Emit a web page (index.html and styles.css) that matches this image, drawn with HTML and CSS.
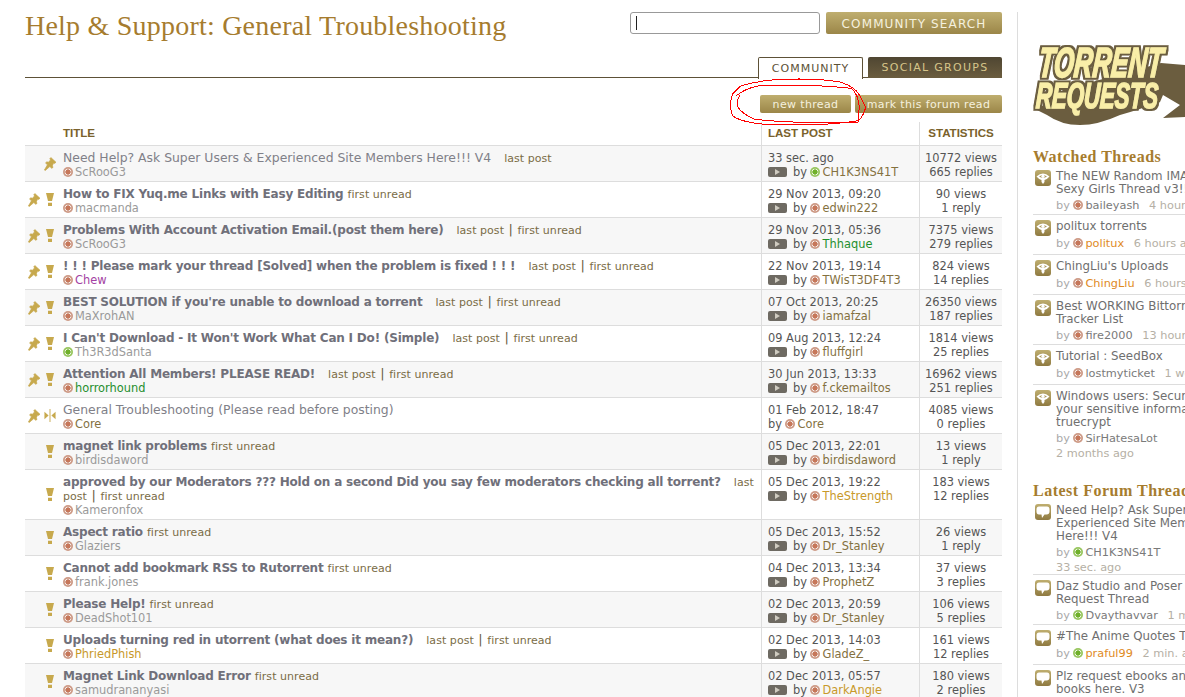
FILE: index.html
```html
<!DOCTYPE html>
<html lang="en">
<head>
<meta charset="utf-8">
<title>Help &amp; Support: General Troubleshooting</title>
<link rel="stylesheet" href="styles.css">
</head>
<body>
<svg class="defs" width="0" height="0" aria-hidden="true">
  <symbol id="pin" viewBox="0 0 14 16"><path d="M8 0.5 L14 6 L12.3 7.3 L11.2 6.7 L9.8 10 L10.5 12 L9 13 L6.8 11 L1.5 15.5 L0.5 15 L4 9 L1.8 6.8 L3.3 5.5 L5.2 6 L7.6 3.2 L6.8 1.8 Z"/></symbol>
  <symbol id="bang" viewBox="0 0 8 13"><path d="M0 0 H8 L6 8 H2 Z M2 9.8 H6 V13 H2 Z"/></symbol>
  <symbol id="moved" viewBox="0 0 12 14"><path d="M0 3 L4.5 7 L0 11 Z M12 3 L7.5 7 L12 11 Z M5.5 0 H6.5 V14 H5.5 Z"/></symbol>
  <symbol id="eye" viewBox="0 0 16 16"><path fill-rule="evenodd" d="M1.5 6.5 Q8 0.5 14.5 6.5 Q12 9.5 9.5 10 L9.5 12 L8 14 L6.5 12 L6.5 10 Q4 9.5 1.5 6.5 Z M4 6.5 Q8 3.5 12 6.5 Q8 9 4 6.5 Z"/><circle cx="8" cy="6.3" r="1.6"/></symbol>
  <symbol id="bubble" viewBox="0 0 16 16"><path d="M4 2.5 H12 Q14.5 2.5 14.5 5.5 V7.5 Q14.5 10.5 11.5 10.5 H9.5 L7 14 L6.5 10.5 H4 Q1.5 10.5 1.5 7.5 V5.5 Q1.5 2.5 4 2.5 Z"/></symbol>
  <filter id="outline" x="-5%" y="-15%" width="110%" height="130%">
    <feMorphology in="SourceAlpha" operator="dilate" radius="2.4" result="fat"/>
    <feFlood flood-color="#6b5d3f"/>
    <feComposite in2="fat" operator="in" result="edge"/>
    <feMerge><feMergeNode in="edge"/><feMergeNode in="SourceGraphic"/></feMerge>
  </filter>
</svg>

<div class="page">
  <main class="content">
    <header class="head">
      <h1 class="page-title">Help &amp; Support: General Troubleshooting</h1>
      <form class="search">
        <span class="field"><input class="search-input" type="text" aria-label="Search"><i class="caret"></i></span>
        <button class="btn btn-search" type="button">COMMUNITY SEARCH</button>
      </form>
    </header>
    <nav class="tabs">
      <a class="tab tab-active">COMMUNITY</a>
      <a class="tab tab-dark">SOCIAL GROUPS</a>
    </nav>
    <div class="actions">
      <button class="btn btn-small btn-new" type="button">new thread</button>
      <button class="btn btn-small btn-read" type="button">mark this forum read</button>
    </div>

    <div class="table">
      <div class="row row-head">
        <div class="c-icons"></div>
        <div class="c-main th">TITLE</div>
        <div class="c-last th">LAST POST</div>
        <div class="c-stat th">STATISTICS</div>
      </div>
      <div class="rows">

      <div class="row">
        <div class="c-icons"><span class="slot"></span><svg class="ic ic-pin"><use href="#pin"/></svg></div>
        <div class="c-main"><div class="line"><a class="t">Need Help? Ask Super Users &amp; Experienced Site Members Here!!! V4</a><span class="links wide">last post</span></div><div class="auth"><i class="dot"></i><span class="n-gray">ScRooG3</span></div></div>
        <div class="c-last"><div>33 sec. ago</div><div class="by"><i class="chip"></i>by <i class="dot dot-g"></i><span class="n-olive">CH1K3NS41T</span></div></div>
        <div class="c-stat">10772 views<br>665 replies</div>
      </div>

      <div class="row">
        <div class="c-icons"><svg class="ic ic-pin"><use href="#pin"/></svg><svg class="ic ic-bang"><use href="#bang"/></svg></div>
        <div class="c-main"><div class="line"><a class="t b">How to FIX Yuq.me Links with Easy Editing</a><span class="links">first unread</span></div><div class="auth"><i class="dot"></i><span class="n-gray">macmanda</span></div></div>
        <div class="c-last"><div>29 Nov 2013, 09:20</div><div class="by"><i class="chip"></i>by <i class="dot"></i><span class="n-olive">edwin222</span></div></div>
        <div class="c-stat">90 views<br>1 reply</div>
      </div>

      <div class="row">
        <div class="c-icons"><svg class="ic ic-pin"><use href="#pin"/></svg><svg class="ic ic-bang"><use href="#bang"/></svg></div>
        <div class="c-main"><div class="line"><a class="t b">Problems With Account Activation Email.(post them here)</a><span class="links wide">last post <s>|</s> first unread</span></div><div class="auth"><i class="dot"></i><span class="n-gray">ScRooG3</span></div></div>
        <div class="c-last"><div>29 Nov 2013, 05:36</div><div class="by"><i class="chip"></i>by <i class="dot"></i><span class="n-green">Thhaque</span></div></div>
        <div class="c-stat">7375 views<br>279 replies</div>
      </div>

      <div class="row">
        <div class="c-icons"><svg class="ic ic-pin"><use href="#pin"/></svg><svg class="ic ic-bang"><use href="#bang"/></svg></div>
        <div class="c-main"><div class="line"><a class="t b">! ! ! Please mark your thread [Solved] when the problem is fixed ! ! !</a><span class="links wide">last post <s>|</s> first unread</span></div><div class="auth"><i class="dot"></i><span class="n-purple">Chew</span></div></div>
        <div class="c-last"><div>22 Nov 2013, 19:14</div><div class="by"><i class="chip"></i>by <i class="dot"></i><span class="n-olive">TWisT3DF4T3</span></div></div>
        <div class="c-stat">824 views<br>14 replies</div>
      </div>

      <div class="row">
        <div class="c-icons"><svg class="ic ic-pin"><use href="#pin"/></svg><svg class="ic ic-bang"><use href="#bang"/></svg></div>
        <div class="c-main"><div class="line"><a class="t b">BEST SOLUTION if you're unable to download a torrent</a><span class="links wide">last post <s>|</s> first unread</span></div><div class="auth"><i class="dot"></i><span class="n-gray">MaXrohAN</span></div></div>
        <div class="c-last"><div>07 Oct 2013, 20:25</div><div class="by"><i class="chip"></i>by <i class="dot"></i><span class="n-olive">iamafzal</span></div></div>
        <div class="c-stat">26350 views<br>187 replies</div>
      </div>

      <div class="row">
        <div class="c-icons"><svg class="ic ic-pin"><use href="#pin"/></svg><svg class="ic ic-bang"><use href="#bang"/></svg></div>
        <div class="c-main"><div class="line"><a class="t b">I Can't Download - It Won't Work What Can I Do! (Simple)</a><span class="links wide">last post <s>|</s> first unread</span></div><div class="auth"><i class="dot dot-g"></i><span class="n-gray">Th3R3dSanta</span></div></div>
        <div class="c-last"><div>09 Aug 2013, 12:24</div><div class="by"><i class="chip"></i>by <i class="dot"></i><span class="n-olive">fluffgirl</span></div></div>
        <div class="c-stat">1814 views<br>25 replies</div>
      </div>

      <div class="row">
        <div class="c-icons"><svg class="ic ic-pin"><use href="#pin"/></svg><svg class="ic ic-bang"><use href="#bang"/></svg></div>
        <div class="c-main"><div class="line"><a class="t b">Attention All Members! PLEASE READ!</a><span class="links wide">last post <s>|</s> first unread</span></div><div class="auth"><i class="dot"></i><span class="n-green">horrorhound</span></div></div>
        <div class="c-last"><div>30 Jun 2013, 13:33</div><div class="by"><i class="chip"></i>by <i class="dot"></i><span class="n-olive">f.ckemailtos</span></div></div>
        <div class="c-stat">16962 views<br>251 replies</div>
      </div>

      <div class="row">
        <div class="c-icons"><svg class="ic ic-pin"><use href="#pin"/></svg><svg class="ic ic-moved"><use href="#moved"/></svg></div>
        <div class="c-main"><div class="line"><a class="t">General Troubleshooting (Please read before posting)</a></div><div class="auth"><i class="dot"></i><span class="n-olive">Core</span></div></div>
        <div class="c-last"><div>01 Feb 2012, 18:47</div><div class="by">by <i class="dot"></i><span class="n-olive">Core</span></div></div>
        <div class="c-stat">4085 views<br>0 replies</div>
      </div>

      <div class="row">
        <div class="c-icons"><span class="slot"></span><svg class="ic ic-bang"><use href="#bang"/></svg></div>
        <div class="c-main"><div class="line"><a class="t b">magnet link problems</a><span class="links">first unread</span></div><div class="auth"><i class="dot"></i><span class="n-gray">birdisdaword</span></div></div>
        <div class="c-last"><div>05 Dec 2013, 22:01</div><div class="by"><i class="chip"></i>by <i class="dot"></i><span class="n-olive">birdisdaword</span></div></div>
        <div class="c-stat">13 views<br>1 reply</div>
      </div>

      <div class="row">
        <div class="c-icons"><span class="slot"></span><svg class="ic ic-bang"><use href="#bang"/></svg></div>
        <div class="c-main"><div class="line"><a class="t b">approved by our Moderators ??? Hold on a second Did you say few moderators checking all torrent?</a><span class="links wide">last post <s>|</s> first unread</span></div><div class="auth"><i class="dot"></i><span class="n-gray">Kameronfox</span></div></div>
        <div class="c-last"><div>05 Dec 2013, 19:22</div><div class="by"><i class="chip"></i>by <i class="dot"></i><span class="n-gold">TheStrength</span></div></div>
        <div class="c-stat">183 views<br>12 replies</div>
      </div>

      <div class="row">
        <div class="c-icons"><span class="slot"></span><svg class="ic ic-bang"><use href="#bang"/></svg></div>
        <div class="c-main"><div class="line"><a class="t b">Aspect ratio</a><span class="links">first unread</span></div><div class="auth"><i class="dot"></i><span class="n-gray">Glaziers</span></div></div>
        <div class="c-last"><div>05 Dec 2013, 15:52</div><div class="by"><i class="chip"></i>by <i class="dot"></i><span class="n-olive">Dr_Stanley</span></div></div>
        <div class="c-stat">26 views<br>1 reply</div>
      </div>

      <div class="row">
        <div class="c-icons"><span class="slot"></span><svg class="ic ic-bang"><use href="#bang"/></svg></div>
        <div class="c-main"><div class="line"><a class="t b">Cannot add bookmark RSS to Rutorrent</a><span class="links">first unread</span></div><div class="auth"><i class="dot"></i><span class="n-gray">frank.jones</span></div></div>
        <div class="c-last"><div>04 Dec 2013, 13:34</div><div class="by"><i class="chip"></i>by <i class="dot"></i><span class="n-olive">ProphetZ</span></div></div>
        <div class="c-stat">37 views<br>3 replies</div>
      </div>

      <div class="row">
        <div class="c-icons"><span class="slot"></span><svg class="ic ic-bang"><use href="#bang"/></svg></div>
        <div class="c-main"><div class="line"><a class="t b">Please Help!</a><span class="links">first unread</span></div><div class="auth"><i class="dot"></i><span class="n-gray">DeadShot101</span></div></div>
        <div class="c-last"><div>02 Dec 2013, 20:59</div><div class="by"><i class="chip"></i>by <i class="dot"></i><span class="n-olive">Dr_Stanley</span></div></div>
        <div class="c-stat">106 views<br>5 replies</div>
      </div>

      <div class="row">
        <div class="c-icons"><span class="slot"></span><svg class="ic ic-bang"><use href="#bang"/></svg></div>
        <div class="c-main"><div class="line"><a class="t b">Uploads turning red in utorrent (what does it mean?)</a><span class="links wide">last post <s>|</s> first unread</span></div><div class="auth"><i class="dot"></i><span class="n-gold">PhriedPhish</span></div></div>
        <div class="c-last"><div>02 Dec 2013, 14:03</div><div class="by"><i class="chip"></i>by <i class="dot"></i><span class="n-olive">GladeZ_</span></div></div>
        <div class="c-stat">161 views<br>12 replies</div>
      </div>

      <div class="row">
        <div class="c-icons"><span class="slot"></span><svg class="ic ic-bang"><use href="#bang"/></svg></div>
        <div class="c-main"><div class="line"><a class="t b">Magnet Link Download Error</a><span class="links">first unread</span></div><div class="auth"><i class="dot"></i><span class="n-gray">samudrananyasi</span></div></div>
        <div class="c-last"><div>02 Dec 2013, 05:57</div><div class="by"><i class="chip"></i>by <i class="dot"></i><span class="n-gold">DarkAngie</span></div></div>
        <div class="c-stat">180 views<br>2 replies</div>
      </div>

      </div>
    </div>
  </main>

  <aside class="side">
    <svg class="logo" viewBox="0 0 152 90" width="152" height="90" role="img" aria-label="Torrent Requests">
      <path class="logo-swoosh" d="M128 23 L152 25 L152 77 L130 78 L147 65 L130 55 L127 62 Q105 70 87 75 Q65 85 47 85 Q28 85 14 75 L4 70 L30 50 Z"/>
      <g filter="url(#outline)">
        <text class="logo-text" x="8" y="37" textLength="124" lengthAdjust="spacingAndGlyphs" transform="skewX(-5)">TORRENT</text>
        <text class="logo-text logo-text2" x="6" y="68" textLength="122" lengthAdjust="spacingAndGlyphs" transform="skewX(-3)">REQUESTS</text>
      </g>
    </svg>

    <h2 class="side-title">Watched Threads</h2>
    <ul class="list">
      <li class="item item-two"><svg class="tile"><use href="#eye"/></svg><div class="body"><a class="it">The NEW Random IMAGE<br>Sexy Girls Thread v3!!</a><div class="meta">by <i class="dot"></i><b>baileyash</b> <span class="ago">4 hours ago</span></div></div></li>
      <li class="item"><svg class="tile"><use href="#eye"/></svg><div class="body"><a class="it">politux torrents</a><div class="meta">by <i class="dot"></i><b class="o">politux</b> <span class="ago">6 hours ago</span></div></div></li>
      <li class="item"><svg class="tile"><use href="#eye"/></svg><div class="body"><a class="it">ChingLiu's Uploads</a><div class="meta">by <i class="dot"></i><b class="o">ChingLiu</b> <span class="ago">6 hours ago</span></div></div></li>
      <li class="item item-two"><svg class="tile"><use href="#eye"/></svg><div class="body"><a class="it">Best WORKING Bittorrent<br>Tracker List</a><div class="meta">by <i class="dot"></i><b>fire2000</b> <span class="ago">13 hours ago</span></div></div></li>
      <li class="item"><svg class="tile"><use href="#eye"/></svg><div class="body"><a class="it">Tutorial : SeedBox</a><div class="meta">by <i class="dot"></i><b>lostmyticket</b> <span class="ago">1 week ago</span></div></div></li>
      <li class="item item-two"><svg class="tile"><use href="#eye"/></svg><div class="body"><a class="it">Windows users: Secure<br>your sensitive information<br>truecrypt</a><div class="meta">by <i class="dot"></i><b>SirHatesaLot</b></div><div class="ago ago-line">2 months ago</div></div></li>
    </ul>

    <h2 class="side-title side-title-2">Latest Forum Threads</h2>
    <ul class="list">
      <li class="item item-two"><svg class="tile"><use href="#bubble"/></svg><div class="body"><a class="it">Need Help? Ask Super Users &amp;<br>Experienced Site Members<br>Here!!! V4</a><div class="meta">by <i class="dot dot-g"></i><b>CH1K3NS41T</b></div><div class="ago ago-line">33 sec. ago</div></div></li>
      <li class="item item-two"><svg class="tile"><use href="#bubble"/></svg><div class="body"><a class="it">Daz Studio and Poser Stuff<br>Request Thread</a><div class="meta">by <i class="dot dot-g"></i><b>Dvaythavvar</b> <span class="ago">1 min. ago</span></div></div></li>
      <li class="item"><svg class="tile"><use href="#bubble"/></svg><div class="body"><a class="it">#The Anime Quotes Thread</a><div class="meta">by <i class="dot dot-g"></i><b class="o">praful99</b> <span class="ago">2 min. ago</span></div></div></li>
      <li class="item item-two"><svg class="tile"><use href="#bubble"/></svg><div class="body"><a class="it">Plz request ebooks and audio<br>books here. V3</a></div></li>
    </ul>
  </aside>

  <svg class="scribble" viewBox="0 0 450 180" width="150" height="60" aria-hidden="true">
    <path d="M62 48 Q120 30 190 28 Q290 24 360 36 Q405 50 418 75 L437 112 Q430 140 415 152 Q340 164 270 164 Q170 167 115 161 Q60 154 38 138 Q25 105 38 72 Z"/>
    <path d="M48 78 Q75 55 115 48 Q250 40 395 55 Q415 75 418 110 L414 156 Q340 156 280 158 Q180 156 105 148 Q62 130 52 108 Q50 90 60 75"/>
  </svg>
</div>
</body>
</html>
```
FILE: styles.css
```css
* { box-sizing: border-box; }
html, body { margin: 0; height: 697px; overflow: hidden; background: #fff; }
body { font: 11.4px/14px "DejaVu Sans", Verdana, sans-serif; color: #55524a; }
.defs { position: absolute; }
ul { list-style: none; margin: 0; padding: 0; }
i { font-style: normal; }
s { text-decoration: none; color: #6b5d3f; font-size: 13px; margin: 0 1px; line-height: 10px; }

.page { position: relative; display: flex; padding: 12px 0 0 25px; width: 1185px; height: 697px; overflow: hidden; }
.content { width: 977px; flex: none; }

/* header */
.head { display: flex; justify-content: space-between; align-items: flex-start; height: 45px; }
.page-title { margin: 0; font: 400 28px/28px "Liberation Serif", Georgia, serif; color: #a67c2e; letter-spacing: .22px; }
.search { display: flex; gap: 6px; }
.field { position: relative; display: block; height: 22px; }
.search-input { display: block; width: 190px; height: 22px; border: 1px solid #999; border-radius: 3px; background: #fff; padding: 0 3px; }
.caret { position: absolute; left: 6px; top: 4px; width: 1px; height: 14px; background: #222; }
.btn { border: 0; border-radius: 2px; color: #f5f1df; cursor: pointer; background: linear-gradient(#bfae6f, #9b8648); font-family: "DejaVu Sans", Verdana, sans-serif; }
.btn-search { width: 176px; height: 22px; font-size: 12px; letter-spacing: 1.12px; padding: 1px 0 0; }

.tabs { display: flex; justify-content: flex-end; gap: 5px; height: 21px; border-bottom: 1px solid #5d5137; }
.tab { display: block; height: 22px; font-size: 11px; line-height: 21px; letter-spacing: 1px; text-align: center; border-radius: 2px 2px 0 0; }
.tab-active { width: 105px; background: #fff; color: #5d5137; border: 1px solid #5d5137; border-bottom: 0; }
.tab-dark { width: 134px; height: 21px; color: #d6c58a; background: linear-gradient(#4f4632, #6b5d3f); letter-spacing: 1.3px; }

.actions { display: flex; justify-content: flex-end; gap: 4px; padding-top: 17px; height: 44px; }
.btn-small { height: 18px; font-size: 11px; padding: 0; letter-spacing: .35px; }
.btn-new { width: 91px; }
.btn-read { width: 147px; }

/* table */
.row { display: grid; grid-template-columns: 38px 698px 158px 83px; border-bottom: 1px solid #ddd; min-height: 36px; }
.row-head { min-height: 24px; height: 24px; }
.c-icons { display: grid; grid-template-columns: 12px 12px; column-gap: 4px; align-items: center; justify-items: center; padding-left: 3px; }
.c-main { padding: 5px 4px 2px 0; }
.c-last { border-left: 1px solid #ddd; padding: 5px 0 0 6px; color: #555; }
.c-stat { border-left: 1px solid #ddd; padding-top: 5px; text-align: center; color: #555; }
.row-head .th { padding-top: 0; font: 700 11.6px/22px "Liberation Sans", Arial, sans-serif; color: #7a622c; letter-spacing: -.05px; }
.rows .row:nth-child(odd) { background: #f7f7f7; }

.slot { width: 12px; }
.ic { fill: #c7a94d; display: block; }
.ic-pin { width: 12px; height: 14px; stroke: #c7a94d; stroke-width: .8; }
.ic-bang { width: 8px; height: 13px; }
.ic-moved { width: 12px; height: 13px; }

.line { line-height: 14px; }
.t { color: #808088; font-size: 12.4px; line-height: 10px; }
.t.b { color: #70707a; font-size: 12px; font-weight: 700; letter-spacing: -.2px; }
.links { color: #7a6c46; font-size: 11px; margin-left: 4px; letter-spacing: .05px; line-height: 10px; }
.links.wide { margin-left: 13px; }
.auth { color: #999; height: 14px; }
.by { height: 14px; }
.by .dot { margin: 0 3px 0 -1px; }

.dot { display: inline-block; width: 10px; height: 10px; border-radius: 50%; vertical-align: -1px; margin-right: 2px; background: radial-gradient(circle, #c6775a 0 2.4px, #f5ece8 2.8px 3.2px, #cd9a86 3.6px 5px); }
.dot-g { background: radial-gradient(circle, #6fb02a 0 2.4px, #eef5e4 2.8px 3.2px, #98c65f 3.6px 5px); }
.chip { display: inline-block; width: 19px; height: 10px; margin-right: 6px; vertical-align: -1px; background: #6e6a62; border-radius: 2px; position: relative; }
.chip::after { content: ""; position: absolute; left: 7px; top: 2px; border-left: 5px solid #cfcbc0; border-top: 3px solid transparent; border-bottom: 3px solid transparent; }

.n-gray { color: #9a9a9a; }
.n-olive { color: #84713f; }
.n-green { color: #1f8f2e; }
.n-purple { color: #a33fa3; }
.n-gold { color: #c8992a; }

/* sidebar */
.side { width: 168px; flex: none; margin-left: 15px; border-left: 1px solid #ddd; padding-left: 15px; }
.logo { display: block; margin-top: 28px; overflow: visible; }
.logo-swoosh { fill: #6b5d3f; }
.logo-text { font: italic 700 42px "Liberation Sans Narrow", "Liberation Sans", sans-serif; fill: #f9eea8; stroke: #f9eea8; stroke-width: 1.5; }
.logo-text2 { font-size: 36px; }
.side-title { margin: 18px 0 0; font: 700 16px/18px "Liberation Serif", Georgia, serif; color: #a67c2e; letter-spacing: .5px; white-space: nowrap; }
.side-title-2 { margin-top: 22px; }
.list { margin-top: -1px; }
.item { display: flex; padding: 5px 0 2px 2px; border-bottom: 1px solid #ddd; }
.item-two { padding-bottom: 0; }
.item:last-child { border-bottom: 0; }
.tile { flex: none; width: 16px; height: 16px; margin-right: 5px; border-radius: 3px; fill: #fff; background: linear-gradient(#bfae6f, #8f7a41); }
.body { line-height: 13px; white-space: nowrap; font-size: 11.3px; }
.it { display: block; min-height: 16px; color: #6f6f6f; font-size: 11.85px; }
.meta { color: #aaa; line-height: 16px; }
.item-two .meta { margin-top: 2px; }
.meta b { font-weight: 400; color: #7a7a7a; }
.meta b.o { color: #e08a1e; }
.ago { color: #b5b0a5; margin-left: 6px; }
.ago-line { margin-left: 0; line-height: 13px; }

/* freehand annotation drawn on top of the screenshot */
.scribble { position: absolute; left: 720px; top: 70px; fill: none; stroke: #f00; stroke-width: 3; shape-rendering: crispEdges; }
```
